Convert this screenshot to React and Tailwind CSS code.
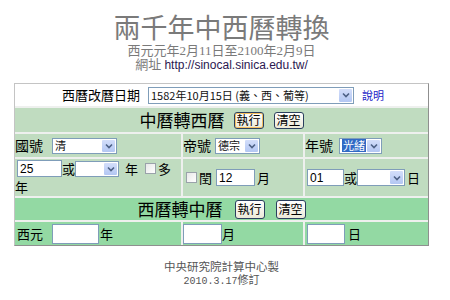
import React from "react";

const cjk = "font-['Noto_Sans_CJK_TC',sans-serif]";
const serif = "font-['Liberation_Serif','Noto_Sans_CJK_TC',serif]";

const Arrow = () => (
    <div className="flex h-full w-[15px] items-center justify-center rounded-[2px] border border-white bg-gradient-to-b from-[#d3defa] to-[#b3c7f3]">
        <svg width="8" height="6" viewBox="0 0 8 6">
            <path d="M1 1.5 L4 4.5 L7 1.5" fill="none" stroke="#4d6185" strokeWidth="1.6" />
        </svg>
    </div>
);

const Select = ({ w, h = 17, text, hl, fs = 11 }) => (
    <div
        className={`flex shrink-0 items-center justify-between border border-[#7f9db9] bg-white ${cjk}`}
        style={{ width: w, height: h, fontSize: fs }}
    >
        <span
            className={`ml-[2px] whitespace-nowrap leading-[13px] ${hl ? "bg-[#316ac5] px-[1px] text-white" : "text-[#111]"}`}
        >
            {text}
        </span>
        <Arrow />
    </div>
);

const Input = ({ w, h = 17, value }) => (
    <div
        className="flex shrink-0 items-center border border-[#7f9db9] bg-white pl-[2px] font-['Liberation_Sans',sans-serif] text-[12px] text-black"
        style={{ width: w, height: h }}
    >
        {value}
    </div>
);

const Check = () => (
    <span className="inline-block h-[11px] w-[11px] shrink-0 border border-[#9aa2aa] bg-gradient-to-br from-[#e8e8e8] to-white" />
);

const Btn = ({ label, main, h = 17 }) => (
    <div
        className={`flex w-[30px] items-center justify-center rounded-[3px] border border-[#2b3f5e] bg-gradient-to-b from-white to-[#ece9d8] text-[12px] text-black ${cjk} ${main ? "shadow-[inset_0_0_0_1px_#f5c060]" : ""}`}
        style={{ height: h }}
    >
        {label}
    </div>
);

const Cell = ({ children, className = "" }) => (
    <div className={`flex items-center bg-[#c0dcc0] text-[13px] text-black ${cjk} ${className}`}>
        {children}
    </div>
);

const Cell2 = ({ children, className = "" }) => (
    <div className={`flex items-center bg-[#93d9a3] text-[13px] text-black ${cjk} ${className}`}>
        {children}
    </div>
);

export default function App() {
    return (
        <div className="flex min-h-[300px] w-[443px] flex-col items-center bg-white">
            {/* header */}
            <h1 className={`mt-[15px] text-[27px] leading-[29px] font-normal text-[#7a7a7a] ${serif}`}>
                兩千年中西曆轉換
            </h1>
            <div className={`text-[13px] leading-[14px] text-[#7a7a7a] ${serif}`}>
                西元元年2月11日至2100年2月9日
            </div>
            <div className={`text-[13px] leading-[14px] text-[#7a7a7a] ${serif}`}>
                網址{" "}
                <span className="font-['Liberation_Sans',sans-serif] text-[12px] text-[#2b1750]">
                    http://sinocal.sinica.edu.tw/
                </span>
            </div>

            {/* table */}
            <div className="mt-[11px] flex w-[415px] flex-col gap-[2px] border border-[#c4c4c4] border-r-[#8f8f8f] border-b-[#8f8f8f] bg-[#eef0ee]">
                <div className={`flex h-[22px] items-center bg-white text-[13px] ${cjk}`}>
                    <span className="ml-[47px] w-[86px] whitespace-nowrap">西曆改曆日期</span>
                    <Select w={206} text="1582年10月15日 (義、西、葡等)" />
                    <span className="ml-[8px] text-[11px] text-[#2424c8]">說明</span>
                </div>

                <Cell className="h-[24px] justify-center">
                    <span className="text-[17px] leading-[20px]">中曆轉西曆</span>
                    <div className="ml-[9px] flex gap-[10px]">
                        <Btn label="執行" main />
                        <Btn label="清空" />
                    </div>
                </Cell>

                <div className="grid grid-cols-[166px_120px_1fr] gap-x-[2px]">
                    <Cell className="h-[23px]">
                        <span className="text-[14px]">國號</span>
                        <div className="ml-[9px]">
                            <Select w={65} h={16} text="清" />
                        </div>
                    </Cell>
                    <Cell className="h-[23px]">
                        <span className="text-[14px]">帝號</span>
                        <div className="ml-[4px]">
                            <Select w={45} h={16} text="德宗" />
                        </div>
                    </Cell>
                    <Cell className="h-[23px]">
                        <span className="text-[14px]">年號</span>
                        <div className="ml-[6px]">
                            <Select w={43} h={16} text="光緒" hl />
                        </div>
                    </Cell>
                </div>

                <div className="grid grid-cols-[166px_120px_1fr] gap-x-[2px]">
                    <Cell className="h-[37px] flex-col !items-start">
                        <div className="flex h-[19px] items-center pl-[2px]">
                            <Input w={45} value="25" />
                            <span>或</span>
                            <Select w={44} h={16} text="" />
                            <span className="ml-[6px]">年</span>
                            <span className="ml-[7px] flex items-center">
                                <Check />
                            </span>
                            <span className="ml-[2px]">多</span>
                        </div>
                        <div className="leading-[17px]">年</div>
                    </Cell>
                    <Cell className="h-[37px]">
                        <span className="ml-[3px] flex items-center">
                            <Check />
                        </span>
                        <span className="ml-[2px]">閏</span>
                        <div className="ml-[4px]">
                            <Input w={39} value="12" />
                        </div>
                        <span className="ml-[2px]">月</span>
                    </Cell>
                    <Cell className="h-[37px]">
                        <div className="ml-[2px]">
                            <Input w={37} value="01" />
                        </div>
                        <span>或</span>
                        <Select w={48} text="" />
                        <span className="ml-[2px]">日</span>
                    </Cell>
                </div>

                <Cell2 className="h-[22px] justify-center">
                    <span className="text-[17px] leading-[20px]">西曆轉中曆</span>
                    <div className="ml-[12px] flex gap-[11px]">
                        <Btn label="執行" h={19} />
                        <Btn label="清空" h={19} />
                    </div>
                </Cell2>

                <div className="grid grid-cols-[166px_120px_1fr] gap-x-[2px]">
                    <Cell2 className="h-[23px]">
                        <span className="ml-[2px]">西元</span>
                        <div className="ml-[9px]">
                            <Input w={47} h={20} />
                        </div>
                        <span className="ml-[1px]">年</span>
                    </Cell2>
                    <Cell2 className="h-[23px]">
                        <Input w={39} h={20} />
                        <span>月</span>
                    </Cell2>
                    <Cell2 className="h-[23px]">
                        <div className="ml-[2px]">
                            <Input w={38} h={20} />
                        </div>
                        <span className="ml-[3px]">日</span>
                    </Cell2>
                </div>
            </div>

            {/* footer */}
            <div className={`mt-[13px] text-center text-[11.5px] leading-[14px] text-[#555] ${cjk}`}>
                <div>中央研究院計算中心製</div>
                <div className="leading-[12px]">
                    <span className="font-['Liberation_Mono',monospace] text-[10px]">2010.3.17</span>
                    <span className="text-[11px]">修訂</span>
                </div>
            </div>
        </div>
    );
}
